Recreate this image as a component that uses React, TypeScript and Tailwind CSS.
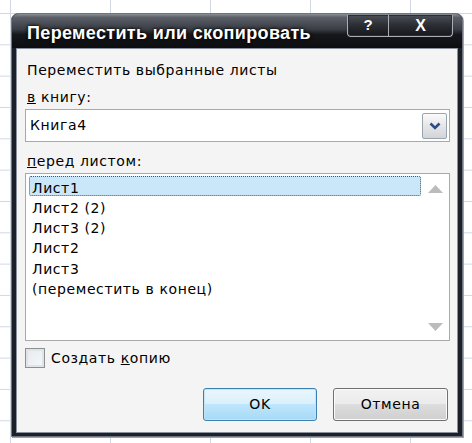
import React from "react";

const body = { fontFamily: '"DejaVu Sans", "Liberation Sans", sans-serif' };

export default function App() {
  const items = ["Лист1", "Лист2 (2)", "Лист3 (2)", "Лист2", "Лист3", "(переместить в конец)"];
  return (
    <div
      className="w-[472px] h-[443px] bg-white overflow-hidden pt-[13px] pl-[11px] [background-image:linear-gradient(to_right,#d0d7e5_1px,transparent_1px),linear-gradient(to_bottom,#d0d7e5_1px,transparent_1px)] [background-size:100px_31.33px] [background-position:10px_13px]"
    >
      <div className="w-[452px] h-[424px] flex flex-col rounded-t-[7px] bg-[#1c2029] border border-[#6f7480] shadow-[1px_1px_0_#9aa3b5]">
        {/* Title bar */}
        <div className="h-[34px] shrink-0 flex items-start rounded-t-[6px] bg-[linear-gradient(to_bottom,#8a8e95_0%,#5b5f67_10%,#3a3d44_45%,#16181c_60%,#0c0d10_100%)] relative">
          <div
            className="pl-[15px] pt-[8px] text-white font-bold text-[18px] leading-[22px] [text-shadow:0_0_4px_#000,0_0_2px_#000] tracking-[0.35px]"
            style={{ fontFamily: '"Liberation Sans", Arial, sans-serif' }}
          >
            Переместить или скопировать
          </div>
          <div className="absolute right-[9px] top-[1px] flex h-[22px] border border-[#a9adb5] border-t-0 rounded-b-[4px] bg-[linear-gradient(to_bottom,#4b4f57,#2a2d33_50%,#15171b)] shadow-[inset_0_0_0_1px_#2a2d33]">
            <div className="w-[41px] flex items-center justify-center text-white font-bold text-[15px] border-r border-[#a9adb5]" style={{ fontFamily: '"Liberation Sans", Arial, sans-serif' }}>?</div>
            <div className="w-[63px] flex items-center justify-center text-white font-bold text-[16px]" style={{ fontFamily: '"Liberation Sans", Arial, sans-serif' }}>X</div>
          </div>
        </div>
        {/* Content */}
        <div
          className="flex-1 mx-[4px] mb-[3px] bg-[#f4f4f4] border border-[#8a909c] pl-[8px] pr-[7px] pt-[11px] flex flex-col text-[14px] tracking-[0.6px] text-black"
          style={body}
        >
          <div className="h-[20px] leading-[20px] pl-[2px]">Переместить выбранные листы</div>
          <div className="h-[20px] leading-[20px] pl-[2px] mt-[7px]"><u>в</u> книгу:</div>
          <div className="mt-[2px] h-[33px] border border-[#a9a9a9] bg-white flex items-center justify-between pl-[4px] pr-[2px]">
            <span>Книга4</span>
            <div className="w-[25px] h-[26px] border border-[#9aa4b0] rounded-[2px] bg-[linear-gradient(to_bottom,#fafafa,#e6e6e6_50%,#d2d4d8)] flex items-center justify-center">
              <svg width="12" height="8" viewBox="0 0 12 8">
                <path d="M1.5 1.5 L6 6 L10.5 1.5" fill="none" stroke="#2c4d86" strokeWidth="2.6" />
              </svg>
            </div>
          </div>
          <div className="h-[20px] leading-[20px] pl-[2px] mt-[9px]"><u>п</u>еред листом:</div>
          <div className="mt-[2px] h-[168px] border border-[#a9a9a9] bg-white flex pt-[2px] pl-[3px]">
            <div className="flex-1 flex flex-col">
              {items.map((t, i) => (
                <div
                  key={t}
                  className={
                    i === 0
                      ? "h-[20px] leading-[18px] pl-[2px] pt-[1px] bg-[#c9e7f8] border border-dotted border-[#555] rounded-[2px]"
                      : "h-[20.2px] leading-[20px] pl-[3px] pt-[1px]"
                  }
                >
                  <span className="relative top-[1px]">{t}</span>
                </div>
              ))}
            </div>
            <div className="w-[28px] flex flex-col items-center justify-between pt-[9px] pb-[9px]">
              <svg width="15" height="8" viewBox="0 0 15 8"><path d="M0 8 L7.5 0 L15 8 Z" fill="#bcbcbc" /></svg>
              <svg width="15" height="8" viewBox="0 0 15 8"><path d="M0 0 L7.5 8 L15 0 Z" fill="#bcbcbc" /></svg>
            </div>
          </div>
          <div className="mt-[7px] h-[20px] flex items-center">
            <div className="w-[20px] h-[20px] border border-[#8e8f8f] bg-[linear-gradient(135deg,#e6eaee,#f6f8fa)] shadow-[inset_0_0_0_2px_#dfe4e9]" />
            <span className="ml-[6px] leading-[20px]">Создать <u>к</u>опию</span>
          </div>
          <div className="mt-[20px] flex justify-end gap-[16px] pr-[2px]">
            <div className="w-[114px] h-[33px] rounded-[3px] border border-[#3c7fb1] bg-[linear-gradient(to_bottom,#eaf6fd,#d9f0fc_50%,#bee6fd_50%,#a7d9f5)] flex items-center justify-center shadow-[inset_0_0_0_1px_#c4e5f6]">
              OK
            </div>
            <div className="w-[115px] h-[33px] rounded-[3px] border border-[#707070] bg-[linear-gradient(to_bottom,#f2f2f2,#ebebeb_50%,#dddddd_50%,#cfcfcf)] flex items-center justify-center shadow-[inset_0_0_0_1px_#fbfbfb]">
              Отмена
            </div>
          </div>
        </div>
      </div>
    </div>
  );
}
